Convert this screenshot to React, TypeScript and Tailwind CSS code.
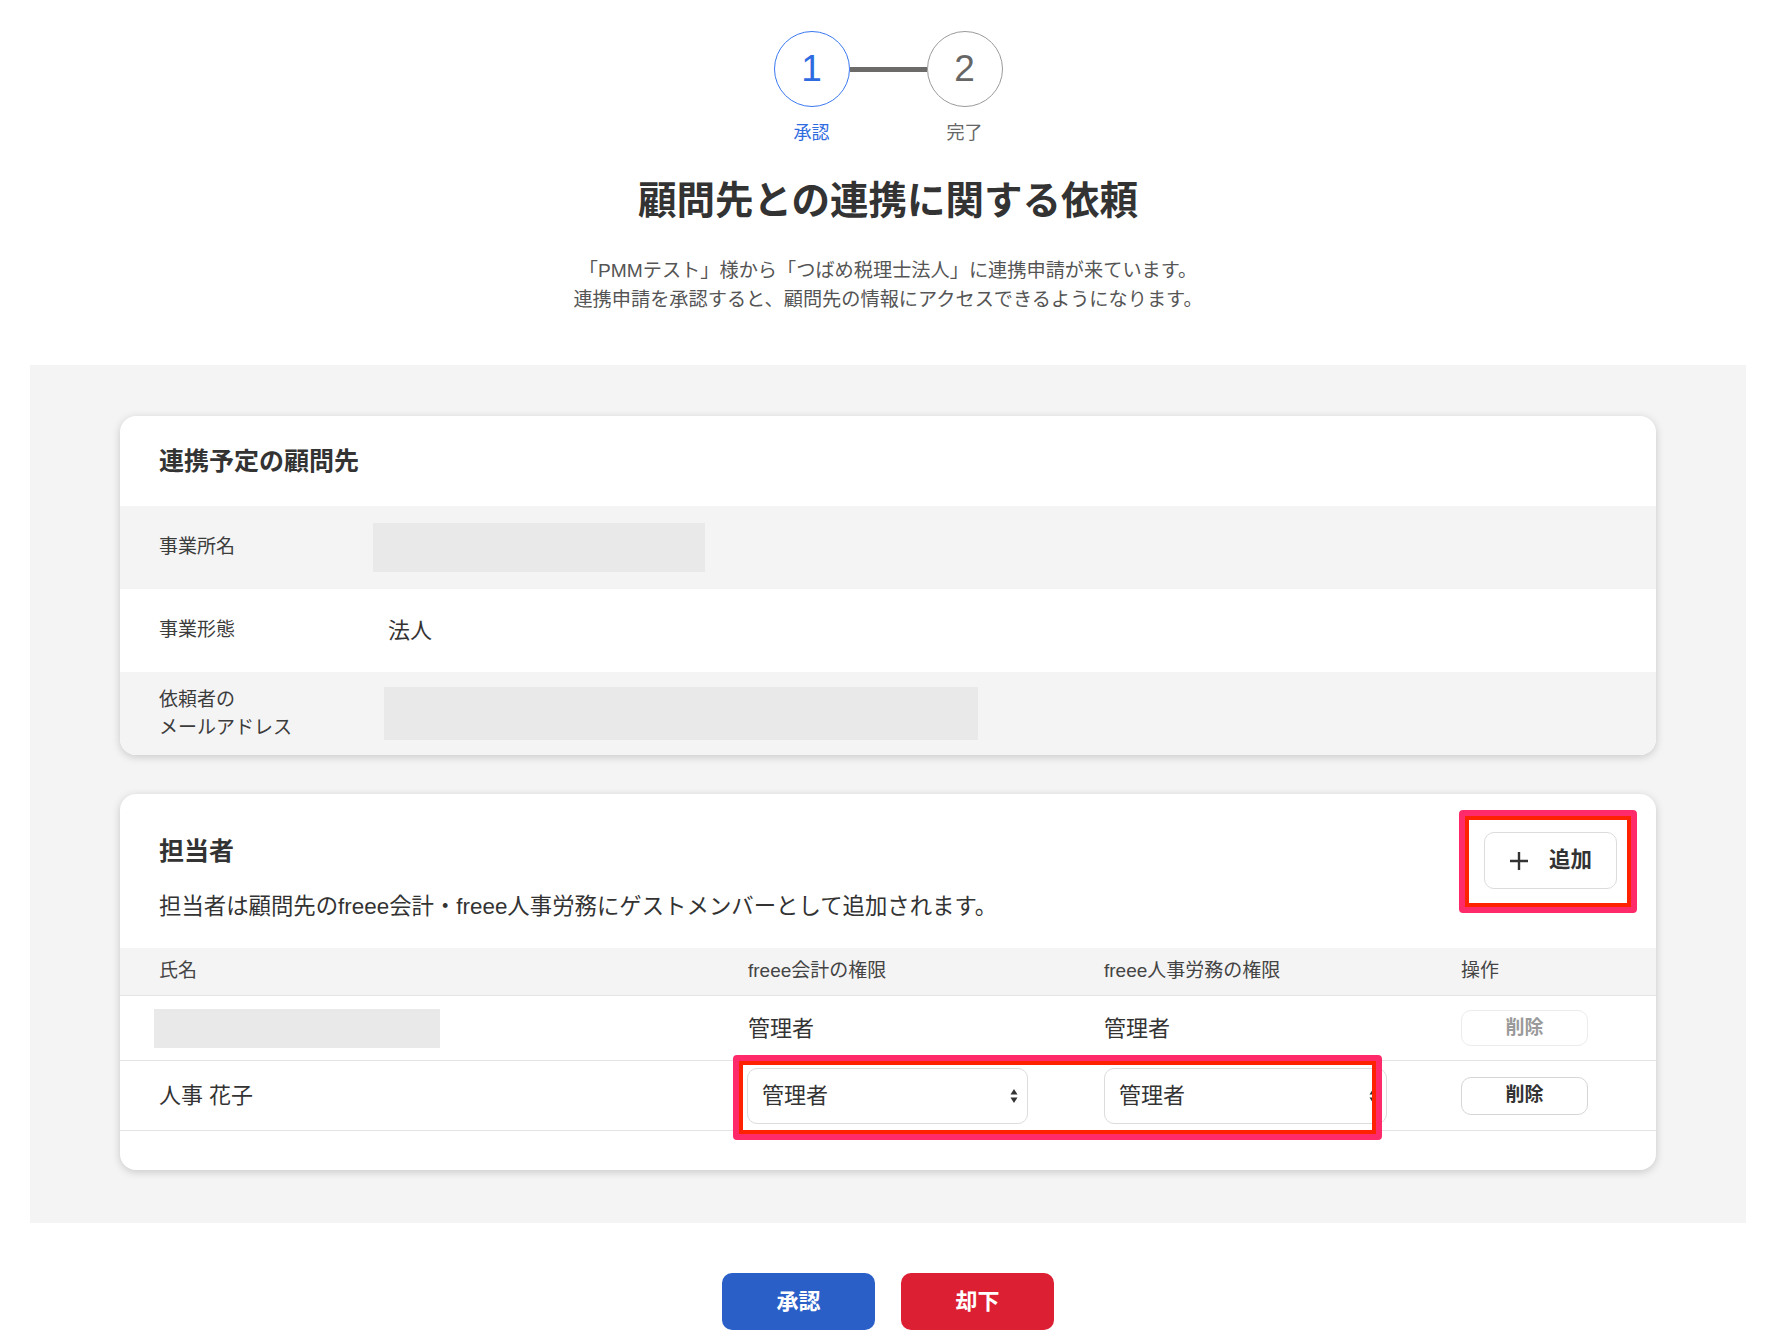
import React from 'react';

const FONT = '"Liberation Sans", "Noto Sans CJK JP", sans-serif';

const SelectArrows: React.FC = () => (
  <svg width="8" height="16" viewBox="0 0 8 16" className="text-[#333]">
    <path d="M4 1 L7.5 6.5 H0.5 Z" fill="currentColor" />
    <path d="M4 15 L7.5 9.5 H0.5 Z" fill="currentColor" />
  </svg>
);

const RoleSelect: React.FC<{ width: string }> = ({ width }) => (
  <div className={`relative ${width}`}>
    <select
      defaultValue="admin"
      className="appearance-none w-full h-[56px] rounded-[10px] border border-[#dcdcdc] bg-white pl-[14px] text-[22px] text-[#333] outline-none"
      style={{ fontFamily: FONT }}
    >
      <option value="admin">管理者</option>
      <option value="member">一般</option>
    </select>
    <div className="pointer-events-none absolute right-[10px] top-1/2 -translate-y-1/2 flex">
      <SelectArrows />
    </div>
  </div>
);

const Highlight: React.FC<{ className: string }> = ({ className }) => (
  <div className={`pointer-events-none absolute rounded-[4px] border-[6px] border-[#ff2a6a] ${className}`}>
    <div className="w-full h-full border-[4px] border-[#ff2200]" />
  </div>
);

const App: React.FC = () => {
  return (
    <div className="min-h-screen bg-white text-[#333]" style={{ fontFamily: FONT }}>
      {/* Stepper */}
      <div className="flex flex-col items-center pt-[31px]">
        <div className="flex items-center">
          <div className="w-[76px] h-[76px] rounded-full border border-[#3a78f0] flex items-center justify-center text-[37px] text-[#2f6be0]">
            1
          </div>
          <div className="w-[77px] h-[5px] bg-[#6d6a6a]" />
          <div className="w-[76px] h-[76px] rounded-full border border-[#9a9a9a] flex items-center justify-center text-[37px] text-[#666]">
            2
          </div>
        </div>
        <div className="flex gap-[116px] mt-[14px] text-[18px] leading-[24px]">
          <span className="w-[37px] text-center text-[#2f6be0]">承認</span>
          <span className="w-[37px] text-center text-[#666]">完了</span>
        </div>
      </div>

      {/* Heading */}
      <h1 className="mt-[31px] text-center text-[38.5px] leading-[50px] font-bold text-[#333]">顧問先との連携に関する依頼</h1>
      <div className="mt-[30px] text-center text-[19.2px] leading-[29px] text-[#555]">
        <p>「PMMテスト」様から「つばめ税理士法人」に連携申請が来ています。</p>
        <p>連携申請を承認すると、顧問先の情報にアクセスできるようになります。</p>
      </div>

      {/* Gray panel */}
      <div className="mt-[51px] mx-[30px] bg-[#f5f4f5] px-[90px] pt-[51px] pb-[53px] flex flex-col gap-[39px]">
        {/* Card 1 */}
        <div className="bg-white rounded-[16px] overflow-hidden shadow-[0_2px_8px_rgba(0,0,0,0.18)]">
          <h2 className="px-[39px] pt-[27px] pb-[27px] text-[25px] leading-[36px] font-bold text-[#333]">連携予定の顧問先</h2>
          <div className="flex items-center h-[83px] bg-[#f5f4f5] px-[39px]">
            <span className="w-[229px] text-[19px] text-[#3c3c3c]">事業所名</span>
            <div className="ml-[-15px] w-[332px] h-[49px] bg-[#e9e9e9]" />
          </div>
          <div className="flex items-center h-[83px] px-[39px]">
            <span className="w-[229px] text-[19px] text-[#3c3c3c]">事業形態</span>
            <span className="text-[22px] text-[#333]">法人</span>
          </div>
          <div className="flex items-center h-[83px] bg-[#f5f4f5] px-[39px]">
            <span className="w-[229px] text-[19px] leading-[28px] text-[#3c3c3c]">
              依頼者の
              <br />
              メールアドレス
            </span>
            <div className="ml-[-4px] w-[594px] h-[53px] bg-[#e9e9e9]" />
          </div>
        </div>

        {/* Card 2 */}
        <div className="bg-white rounded-[16px] shadow-[0_2px_8px_rgba(0,0,0,0.18)] pb-[39px]">
          <div className="flex justify-between items-start px-[39px] pt-[38px] pb-[25px]">
            <div>
              <h2 className="pt-[1px] text-[25px] leading-[36px] font-bold text-[#333]">担当者</h2>
              <p className="mt-[22px] text-[22.4px] leading-[32px] text-[#333]">
                担当者は顧問先のfreee会計・freee人事労務にゲストメンバーとして追加されます。
              </p>
            </div>
            <div className="relative">
              <button className="flex items-center gap-[20px] w-[133px] h-[57px] justify-center rounded-[10px] border border-[#dcdcdc] bg-white text-[21.5px] font-bold text-[#333]">
                <svg width="20" height="20" viewBox="0 0 20 20">
                  <path d="M10 1 V19 M1 10 H19" stroke="#333" strokeWidth="2.4" />
                </svg>
                追加
              </button>
              <Highlight className="left-[-25px] right-[-20px] top-[-22px] bottom-[-24px]" />
            </div>
          </div>

          {/* Table */}
          <div className="grid grid-cols-[589px_356px_357px_1fr] items-center h-[48px] bg-[#f5f4f5] border-b border-[#e4e4e4] px-[39px] text-[19px] text-[#444]">
            <span>氏名</span>
            <span>freee会計の権限</span>
            <span>freee人事労務の権限</span>
            <span>操作</span>
          </div>
          <div className="grid grid-cols-[589px_356px_357px_1fr] items-center h-[65px] border-b border-[#e4e4e4] px-[39px] text-[22px] text-[#333]">
            <div className="ml-[-5px] w-[286px] h-[39px] bg-[#e9e9e9]" />
            <span>管理者</span>
            <span>管理者</span>
            <button disabled className="w-[127px] h-[36px] rounded-[10px] border border-[#ececec] bg-white text-[19px] font-bold text-[#9a9a9a]">
              削除
            </button>
          </div>
          <div className="relative grid grid-cols-[589px_356px_357px_1fr] items-center h-[70px] border-b border-[#e4e4e4] px-[39px] text-[22px] text-[#333]">
            <span>人事 花子</span>
            <div className="ml-[-1px]">
              <RoleSelect width="w-[281px]" />
            </div>
            <div>
              <RoleSelect width="w-[283px]" />
            </div>
            <button className="w-[127px] h-[38px] rounded-[10px] border border-[#d6d6d6] bg-white text-[19px] font-bold text-[#333]">
              削除
            </button>
            <Highlight className="left-[613px] top-[-6px] w-[649px] h-[85px]" />
          </div>
        </div>
      </div>

      {/* Actions */}
      <div className="flex justify-center gap-[26px] mt-[50px] pb-[20px]">
        <button className="w-[153px] h-[57px] rounded-[10px] bg-[#2b5fc8] text-white text-[22px] font-bold">承認</button>
        <button className="w-[153px] h-[57px] rounded-[10px] bg-[#dc1f33] text-white text-[22px] font-bold">却下</button>
      </div>
    </div>
  );
};

export default App;
